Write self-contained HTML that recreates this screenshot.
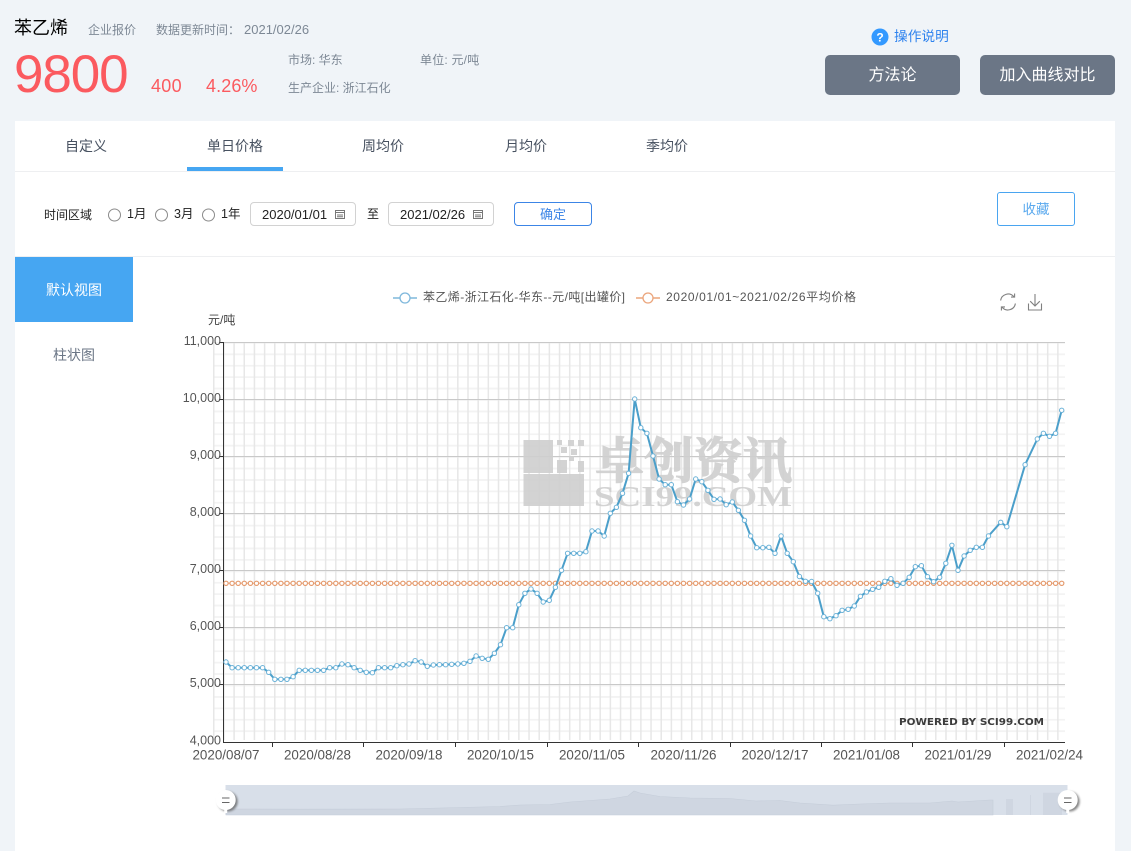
<!DOCTYPE html>
<html lang="zh">
<head>
<meta charset="utf-8">
<title>苯乙烯</title>
<style>
html,body{margin:0;padding:0;}
body{width:1131px;height:851px;overflow:hidden;background:#f0f4f8;position:relative;font-family:"Liberation Sans","Noto Sans CJK SC",sans-serif;}
.a{position:absolute;white-space:nowrap;line-height:1;}
.g{color:#7d8895;font-size:12px;}
.red{color:#fb5a5f;}
.btn{position:absolute;top:55px;width:135px;height:40px;background:#6b7686;border-radius:5px;color:#fff;font-size:16px;line-height:42px;text-align:center;}
.card{position:absolute;left:15px;top:121px;width:1100px;height:730px;background:#fff;}
.tab{color:#475160;font-size:14px;top:139px;}
.box{position:absolute;top:202px;width:104px;height:22px;border:1px solid #d2d2d2;border-radius:4px;background:#fff;}
.k{color:#222;font-size:12.5px;}
svg{position:absolute;left:0;top:0;}
</style>
</head>
<body>
<div class="a" style="left:14px;top:19px;font-size:18px;color:#000;">苯乙烯</div>
<div class="a g" style="left:88px;top:24px;">企业报价</div>
<div class="a g" style="left:156px;top:24px;">数据更新时间：</div>
<div class="a g" style="left:244px;top:23px;font-size:13px;">2021/02/26</div>
<div class="a red" style="left:14px;top:48px;font-size:53px;letter-spacing:-1.1px;">9800</div>
<div class="a red" style="left:151px;top:77px;font-size:18px;letter-spacing:.3px;">400</div>
<div class="a red" style="left:206px;top:77px;font-size:18px;letter-spacing:.1px;">4.26%</div>
<div class="a g" style="left:288px;top:54px;">市场: 华东</div>
<div class="a g" style="left:420px;top:54px;letter-spacing:.2px;">单位: 元/吨</div>
<div class="a g" style="left:288px;top:82px;">生产企业: 浙江石化</div>
<div class="a" style="left:894px;top:30px;font-size:13.7px;color:#2f83ee;">操作说明</div>
<div class="btn" style="left:825px;">方法论</div>
<div class="btn" style="left:980px;">加入曲线对比</div>

<div class="card"></div>
<div class="a" style="left:15px;top:171px;width:1100px;height:1px;background:#eeeff1;"></div>
<div class="a" style="left:15px;top:256px;width:1100px;height:1px;background:#eeeff1;"></div>
<div class="a tab" style="left:65px;">自定义</div>
<div class="a tab" style="left:207px;">单日价格</div>
<div class="a tab" style="left:362px;">周均价</div>
<div class="a tab" style="left:505px;">月均价</div>
<div class="a tab" style="left:646px;">季均价</div>
<div class="a" style="left:187px;top:167px;width:96px;height:4px;background:#46a6f2;"></div>

<div class="a k" style="left:44px;top:209px;font-size:12px;">时间区域</div>
<div class="a k" style="left:127px;top:208px;">1月</div>
<div class="a k" style="left:174px;top:208px;">3月</div>
<div class="a k" style="left:221px;top:208px;">1年</div>
<div class="box" style="left:250px;"></div>
<div class="a k" style="left:262px;top:208px;font-size:13px;">2020/01/01</div>
<div class="a k" style="left:367px;top:208px;font-size:12px;">至</div>
<div class="box" style="left:388px;"></div>
<div class="a k" style="left:400px;top:208px;font-size:13px;">2021/02/26</div>
<div class="a" style="left:514px;top:202px;width:76px;height:22px;border:1px solid #3c85e6;border-radius:4px;color:#3c85e6;font-size:13px;line-height:24px;text-align:center;">确定</div>
<div class="a" style="left:997px;top:192px;width:76px;height:32px;border:1px solid #4aa5f0;border-radius:3px;color:#5aa9ee;font-size:13.5px;line-height:34px;text-align:center;">收藏</div>

<div class="a" style="left:15px;top:257px;width:118px;height:65px;background:#46a6f2;color:#fff;font-size:14px;line-height:66px;text-align:center;">默认视图</div>
<div class="a" style="left:15px;top:348px;width:118px;font-size:14px;color:#6b7686;text-align:center;">柱状图</div>

<svg width="1131" height="851" viewBox="0 0 1131 851" xmlns="http://www.w3.org/2000/svg" font-family="'Liberation Sans','Noto Sans CJK SC',sans-serif">
<defs>
<marker id="m" markerUnits="userSpaceOnUse" markerWidth="8" markerHeight="8" refX="4" refY="4" overflow="visible">
<circle cx="4" cy="4" r="2.2" fill="#fff" stroke="#6db3d8" stroke-width="1"/>
</marker>
<filter id="sh" x="-50%" y="-50%" width="200%" height="200%"><feGaussianBlur stdDeviation="1"/></filter>
</defs>

<!-- help icon -->
<circle cx="880" cy="37" r="8.5" fill="#3399ff"/>
<text x="880" y="41.5" font-size="12" font-weight="bold" fill="#fff" text-anchor="middle">?</text>

<!-- radios -->
<g fill="#fff" stroke="#8a8a8a" stroke-width="1">
<circle cx="114.5" cy="215" r="6"/><circle cx="161.5" cy="215" r="6"/><circle cx="208.5" cy="215" r="6"/>
</g>
<!-- calendar icons -->
<g fill="none" stroke="#777" stroke-width="1">
<path d="M335.5 210.5h9v8h-9zM335.5 212.5h9M337 215h6M337 216.8h6"/>
<path d="M473.5 210.5h9v8h-9zM473.5 212.5h9M475 215h6M475 216.8h6"/>
</g>

<!-- legend -->
<path d="M393 298h24" stroke="#7fb8dc" stroke-width="1.5"/>
<circle cx="405" cy="298" r="5" fill="#fff" stroke="#7fb8dc" stroke-width="1.3"/>
<text x="423" y="301" font-size="12" fill="#555" textLength="202" lengthAdjust="spacing">苯乙烯-浙江石化-华东--元/吨[出罐价]</text>
<path d="M636 298h24" stroke="#eba57c" stroke-width="1.5"/>
<circle cx="648" cy="298" r="5" fill="#fff" stroke="#eba57c" stroke-width="1.3"/>
<text x="666" y="301" font-size="12" fill="#555" textLength="190" lengthAdjust="spacing">2020/01/01~2021/02/26平均价格</text>

<!-- tools -->
<g fill="none" stroke="#808080" stroke-width="1.1">
<path d="M1000.6 300.5a7.6 7.6 0 0 1 13.2-3.9"/>
<path d="M1015.4 303.5a7.6 7.6 0 0 1-13.2 3.9"/>
<path d="M1014.6 293.5v3.6h-3.6M1001.4 310.5v-3.6h3.6"/>
<path d="M1028.5 303.5v6.5h13v-6.5M1035 294v12M1030.2 301.2l4.8 4.8 4.8-4.8"/>
</g>

<text x="208" y="324" font-size="12" fill="#444">元/吨</text>

<!-- grid -->
<line x1="639" y1="342" x2="639" y2="740" stroke="#f3f3f3" stroke-width="852" stroke-dasharray="1.8 9.62"/>
<line x1="213" y1="541" x2="1065" y2="541" stroke="#e7e7e7" stroke-width="398" stroke-dasharray="1.5 8.67"/>
<path d="M223 342.5H1065M223 399.5H1065M223 456.5H1065M223 513.5H1065M223 570.5H1065M223 627.5H1065M223 684.5H1065" stroke="#c9c9c9" stroke-width="1" fill="none"/>

<!-- watermark -->
<g fill="#cfcfcf" opacity=".9">
<rect x="523.5" y="440" width="29.5" height="33"/>
<rect x="523.5" y="474" width="60.5" height="32"/>
<rect x="557" y="460" width="10" height="13"/><rect x="568" y="440" width="6" height="6"/><rect x="578" y="440" width="6" height="6"/>
<rect x="561" y="447" width="6" height="6"/><rect x="571" y="449" width="6" height="6"/><rect x="557" y="440" width="5" height="5"/>
<rect x="578" y="461" width="6" height="11"/><rect x="569" y="456" width="5" height="5"/>
<text x="595" y="478" font-size="49" font-weight="bold" stroke="#cfcfcf" stroke-width="1.2" font-family="'Noto Serif CJK SC',serif" textLength="197">卓创资讯</text>
<text x="594" y="506" font-size="29" font-weight="bold" font-family="'Liberation Serif',serif" textLength="198" lengthAdjust="spacingAndGlyphs">SCI99.COM</text>
</g>

<!-- axes -->
<path d="M223.5 342V742.5H1065" fill="none" stroke="#333" stroke-width="1"/>
<path d="M219 342.5h4M219 399.5h4M219 456.5h4M219 513.5h4M219 570.5h4M219 627.5h4M219 684.5h4M272.5 742v5M363.5 742v5M455.5 742v5M547.5 742v5M638.5 742v5M730.5 742v5M821.5 742v5M912.5 742v5M1004.5 742v5" stroke="#333" stroke-width="1" fill="none"/>
<g font-size="12.5" fill="#555" text-anchor="end">
<text x="221" y="345">11,000</text><text x="221" y="402">10,000</text><text x="221" y="459">9,000</text><text x="221" y="516">8,000</text><text x="221" y="573">7,000</text><text x="221" y="630">6,000</text><text x="221" y="687">5,000</text><text x="221" y="744.5">4,000</text>
</g>
<g font-size="13.4" fill="#555" text-anchor="middle">
<text x="226" y="759.5">2020/08/07</text><text x="317.5" y="759.5">2020/08/28</text><text x="409" y="759.5">2020/09/18</text><text x="500.5" y="759.5">2020/10/15</text><text x="592" y="759.5">2020/11/05</text><text x="683.5" y="759.5">2020/11/26</text><text x="775" y="759.5">2020/12/17</text><text x="866.5" y="759.5">2021/01/08</text><text x="958" y="759.5">2021/01/29</text><text x="1049.5" y="759.5">2021/02/24</text>
</g>

<text x="899" y="725" font-size="10" font-weight="bold" fill="#3c3c3c" font-family="'DejaVu Sans',sans-serif" textLength="145" lengthAdjust="spacingAndGlyphs">POWERED BY SCI99.COM</text>

<!-- average line -->
<line x1="226" y1="583.3" x2="1062" y2="583.3" stroke="#e8a27a" stroke-width="1"/>
<line x1="226" y1="583.3" x2="1062" y2="583.3" stroke="#e5996b" stroke-width="5.4" stroke-linecap="round" stroke-dasharray="0 6.1"/>
<line x1="226" y1="583.3" x2="1062" y2="583.3" stroke="#fff" stroke-width="3.2" stroke-linecap="round" stroke-dasharray="0 6.1"/>

<!-- series -->
<polyline fill="none" stroke="#4b9fca" stroke-width="2" stroke-linejoin="round" marker-start="url(#m)" marker-mid="url(#m)" marker-end="url(#m)" points="226,662 232.1,667.7 238.2,667.7 244.3,667.7 250.4,667.7 256.5,667.7 262.6,667.7 268.7,672.3 274.8,679.3 280.9,679.3 287,679.3 293.1,676.7 299.2,670.3 305.3,670.3 311.4,670.3 317.5,670.3 323.6,670.3 329.7,667.7 335.8,667.7 341.9,664 348,664.7 354.1,667.7 360.2,670.3 366.3,672.3 372.4,672.7 378.5,667.7 384.6,667.7 390.7,667.7 396.8,665.7 402.9,664.7 409,664 415.1,660.7 421.2,662 427.3,666.3 433.4,665 439.5,664.7 445.6,664.7 451.7,664.3 457.8,664 463.9,663.3 470,661.3 476.1,656 482.2,658.3 488.3,659.3 494.4,653.3 500.5,644.7 506.6,627.7 512.7,627.7 518.8,604.7 524.9,593.3 531,589 537.1,593.3 543.2,602 549.3,600.3 555.4,587.3 561.5,570.3 567.6,553.3 573.7,553.3 579.8,553.3 585.9,551.7 592,531 598.1,531 604.2,536 610.3,513.3 616.4,507.3 622.5,493.3 628.6,473.3 634.7,399 640.8,427.7 646.9,433.3 653,456 659.1,479 665.2,484.7 671.3,484.7 677.4,501.7 683.5,505 689.6,499 695.7,479 701.8,481.7 707.9,490.3 714,499.3 720.1,499 726.2,504.7 732.3,502 738.4,510.3 744.5,520.3 750.6,536 756.7,547.7 762.8,547.7 768.9,547.3 775,553.3 781.1,536 787.2,553.3 793.3,561.7 799.4,576.5 805.5,581.3 811.6,581.5 817.7,593.2 823.8,616.7 829.9,618.7 836,615.7 842.1,610.3 848.2,609.3 854.3,606 860.4,596.3 866.5,592 872.6,589.3 878.7,587.3 884.8,581.3 890.9,578.7 897,585.3 903.1,583.3 909.2,577.3 915.3,566.7 921.4,565.7 927.5,576.7 933.6,581.7 939.7,577.3 945.8,563.3 951.9,545.3 958,570.3 964.1,556 970.2,550.3 976.3,547.3 982.4,547.3 988.5,536 1000.7,522.3 1006.8,526.7 1025.1,464.7 1037.3,439 1043.4,433.3 1049.5,436.3 1055.6,433.3 1061.7,410.3"/>

<!-- slider -->
<rect x="225.5" y="785" width="842" height="30" fill="#d8dfe9"/>
<path d="M226 809L300 809.2L400 809L500 806.5L520 805L550 804.5L570 802L590 800.5L610 799L628 796L634 791L640 793L660 796.5L690 798L730 798.5L756 801L780 800.5L800 803L833 805.2L860 804L890 803L930 803L952 801L958 802L990 800L993 800V815H226Z" fill="#cfd6e1" stroke="#c5cdd9" stroke-width=".6"/>
<path d="M1006 799H1013V815H1006ZM1030 795H1031V815H1030ZM1043 792.7H1062V815H1043Z" fill="#cfd6e1"/>
<g>
<circle cx="227.7" cy="801.5" r="10" fill="#555" opacity=".7" filter="url(#sh)"/>
<path d="M225.7 808v5" stroke="#fff" stroke-width="3"/>
<circle cx="225.7" cy="800" r="10" fill="#fff"/>
<path d="M222 798h7.5M222 802.5h7.5" stroke="#666" stroke-width="1"/>
<circle cx="1069.7" cy="801.5" r="10" fill="#555" opacity=".7" filter="url(#sh)"/>
<path d="M1067.7 808v5" stroke="#fff" stroke-width="3"/>
<circle cx="1067.7" cy="800" r="10" fill="#fff"/>
<path d="M1064 798h7.5M1064 802.5h7.5" stroke="#666" stroke-width="1"/>
</g>
</svg>
</body>
</html>
